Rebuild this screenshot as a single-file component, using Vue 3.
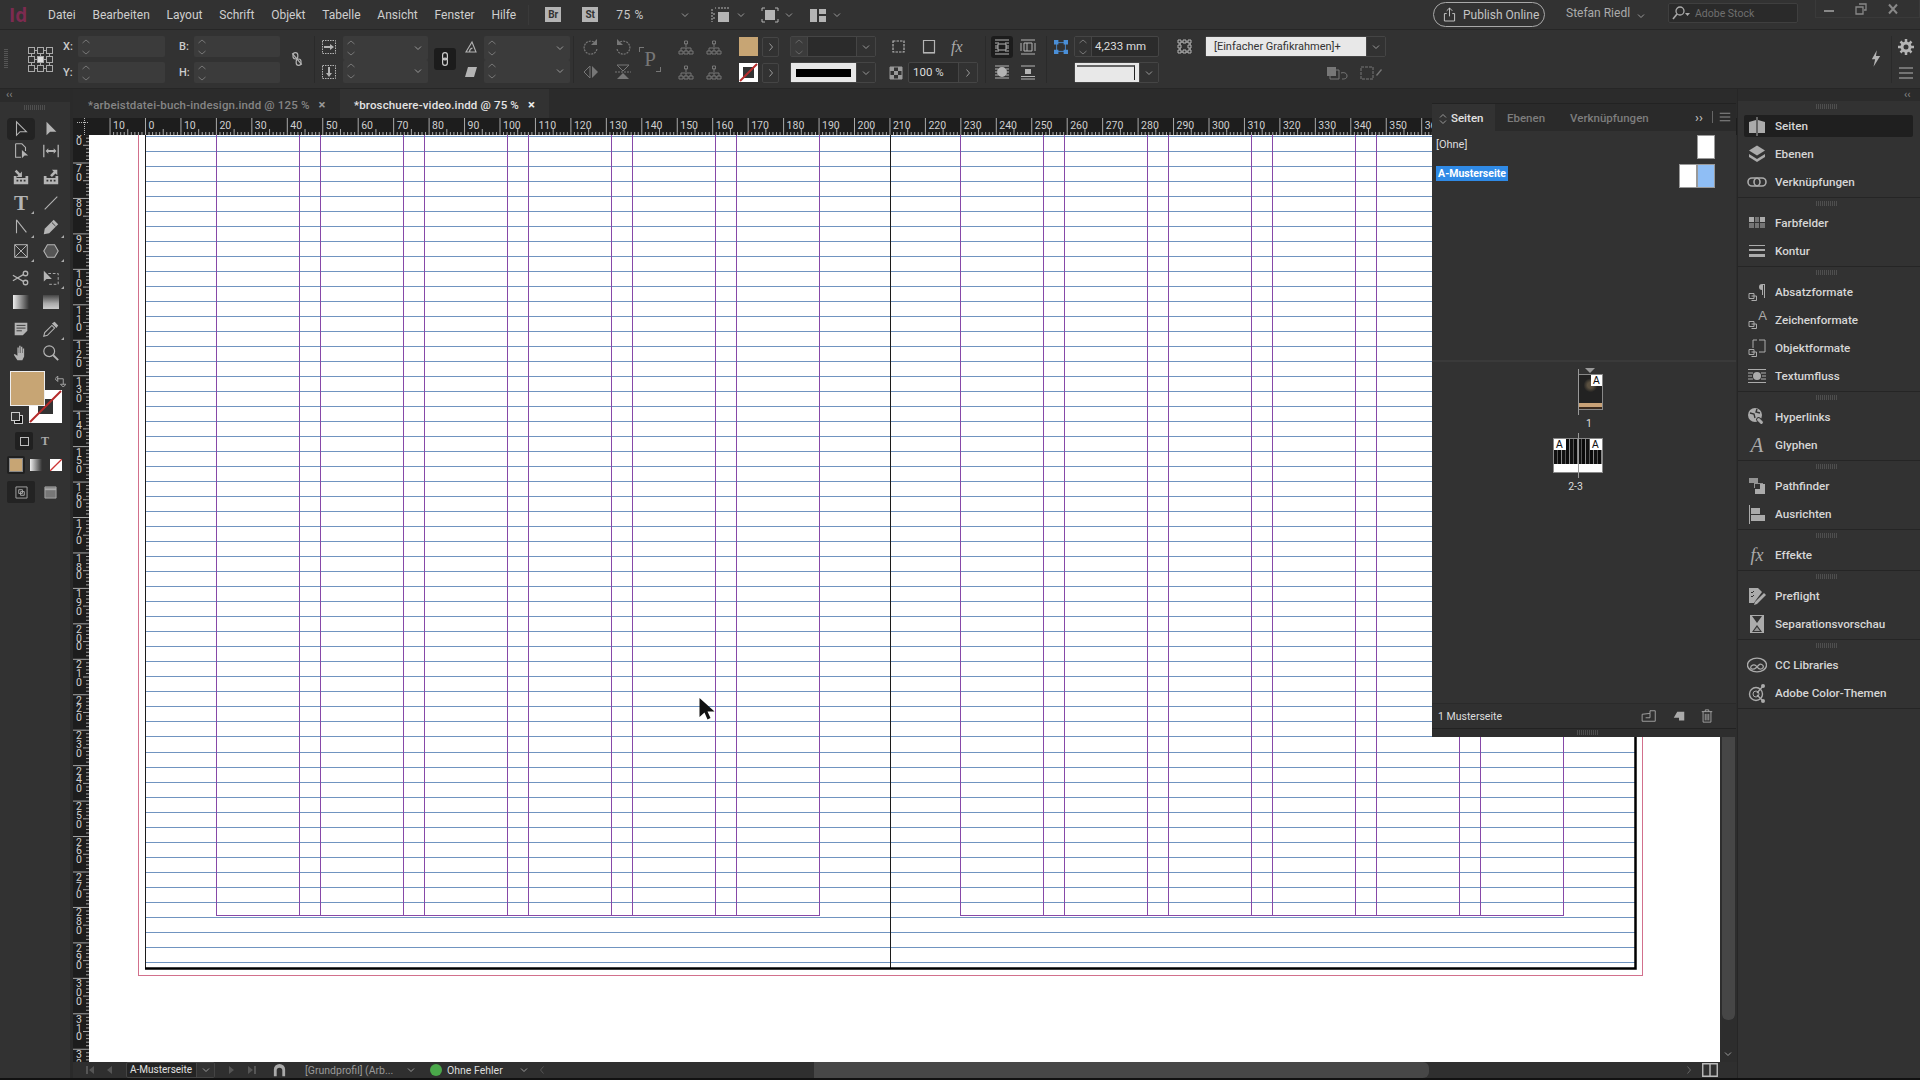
<template>
  <div class="app">
    <svg class="defs" width="0" height="0">
      <symbol id="i-chev" viewBox="0 0 10 10"><path d="M2 3.500l3 3 3-3" fill="none" stroke="currentColor" stroke-width="1"/></symbol>
      <symbol id="i-right" viewBox="0 0 10 10"><path d="M3.500 1.500l3 3.500-3 3.500" fill="none" stroke="currentColor" stroke-width="1"/></symbol>
      <symbol id="i-spin" viewBox="0 0 12 20"><path d="M2.500 6l3.500-3 3.500 3M2.500 14l3.500 3 3.500-3" fill="none" stroke="currentColor" stroke-width="1"/></symbol>
      <symbol id="i-seiten" viewBox="0 0 20 20"><path d="M2 6l7-2v13H2zM11 4l7 2v11h-7z" fill="currentColor"/><path d="M10 1v19" stroke="currentColor"/></symbol>
      <symbol id="i-ebenen" viewBox="0 0 20 20"><path d="M10 1.500l8 5-8 5-8-5z" fill="currentColor"/><path d="M2 10l8 5 8-5v3l-8 5-8-5z" fill="currentColor"/></symbol>
      <symbol id="i-link" viewBox="0 0 20 20"><rect x="1" y="6" width="12" height="8" rx="4" fill="none" stroke="currentColor" stroke-width="1.600"/><rect x="7" y="6" width="12" height="8" rx="4" fill="none" stroke="currentColor" stroke-width="1.600"/></symbol>
      <symbol id="i-farb" viewBox="0 0 20 20"><path d="M2 4h5v5H2zM13 4h5v5h-5z" fill="currentColor"/><path d="M8 4h4v5H8zM2 10h5v5H2zM8 10h4v5H8zM13 10h5v5h-5z" fill="currentColor" opacity=".55"/></symbol>
      <symbol id="i-kontur" viewBox="0 0 20 20"><path d="M2 4h16v1H2zM2 8h16v2H2zM2 13h16v3H2z" fill="currentColor"/></symbol>
      <symbol id="i-absatz" viewBox="0 0 20 20"><path d="M2 11.500h5v5H2zM4.500 14h5v4.500h-5" fill="none" stroke="currentColor"/><path d="M12 2h6v14h-1V3h-1v10h-1V8c-2 0-3-1-3-3s1-3 3-3z" fill="currentColor"/></symbol>
      <symbol id="i-zeichen" viewBox="0 0 20 20"><path d="M2 11.500h5v5H2zM4.500 14h5v4.500h-5" fill="none" stroke="currentColor"/></symbol>
      <symbol id="i-objekt" viewBox="0 0 20 20"><path d="M6 2h4M12 2h6v12h-6M6 2v8" fill="none" stroke="currentColor"/><path d="M2 11.500h5v5H2zM4.500 14h5v4.500h-5" fill="none" stroke="currentColor"/></symbol>
      <symbol id="i-fluss" viewBox="0 0 20 20"><path d="M1 3h18v1H1zM1 16h18v1H1zM1 6.500h5v1H1zM1 9.500h4v1H1zM1 12.500h5v1H1zM14 6.500h5v1h-5zM15 9.500h4v1h-4zM14 12.500h5v1h-5z" fill="currentColor"/><circle cx="10" cy="10" r="4" fill="currentColor"/></symbol>
      <symbol id="i-hyper" viewBox="0 0 20 20"><circle cx="8" cy="8" r="7" fill="currentColor"/><path d="M3 6l4 1 1 4M10 2l-1 3 4 1" fill="none" stroke="#323232" stroke-width="1.400"/><rect x="9" y="12" width="8" height="4" rx="2" transform="rotate(45 13 14)" fill="currentColor" stroke="#323232"/></symbol>
      <symbol id="i-path" viewBox="0 0 20 20"><path d="M2 2h9v5h5v5H7V7H2z" fill="currentColor" opacity=".8"/><path d="M8 8h10v10H8z" fill="currentColor"/><path d="M8 8h5v5H8z" fill="#323232"/></symbol>
      <symbol id="i-aus" viewBox="0 0 20 20"><path d="M2 1h1v19H2z" fill="currentColor"/><path d="M4 4h9v6H4zM4 11h14v6H4z" fill="currentColor"/></symbol>
      <symbol id="i-pre" viewBox="0 0 20 20"><path d="M2 2h9l4 4-6 8-2 3H2z" fill="currentColor"/><path d="M8 16l9-9 2 2-9 9-3 1z" fill="currentColor"/><path d="M4 6l1 1 2-2M4 10l1 1 2-2" fill="none" stroke="#323232"/></symbol>
      <symbol id="i-sep" viewBox="0 0 20 20"><path d="M3 1h14v18H3z" fill="currentColor"/><path d="M5 2l5 7 5-7zM5 18l5-7 5 7z" fill="#323232"/><path d="M7 17l3-4 3 4z" fill="currentColor" opacity=".8"/></symbol>
      <symbol id="i-cc" viewBox="1 1 22 18"><ellipse cx="12" cy="10" rx="10.500" ry="7.500" fill="none" stroke="currentColor" stroke-width="1.500"/><path d="M5 13c0-3 4-4 6-2l3 3c2 1 5 0 5-2s-3-4-5-2l-3 3c-2 2-6 2-6 0z" fill="none" stroke="currentColor" stroke-width="1.400"/></symbol>
      <symbol id="i-color" viewBox="0 0 20 20"><circle cx="9" cy="11" r="6.500" fill="none" stroke="currentColor" stroke-width="1.400"/><circle cx="9" cy="11" r="3" fill="none" stroke="currentColor"/><path d="M10 10l6-7M10 12l6 6" stroke="currentColor" stroke-width="1.400"/><circle cx="16" cy="3" r="2" fill="currentColor"/><circle cx="16" cy="18" r="2" fill="currentColor"/></symbol>

      <symbol id="t-sel" viewBox="0 0 20 20"><path d="M5 2v15l4-4h7z" fill="none" stroke="currentColor" stroke-width="1.200"/></symbol>
      <symbol id="t-dir" viewBox="0 0 20 20"><path d="M5 2v15l4-4h7z" fill="currentColor"/></symbol>
      <symbol id="t-page" viewBox="0 0 20 20"><path d="M4 2h7l4 4v4M4 2v15h6" fill="none" stroke="currentColor" stroke-width="1.200"/><path d="M11 9v9l3-3h4z" fill="currentColor"/></symbol>
      <symbol id="t-gap" viewBox="0 0 20 20"><path d="M2 3v14M18 3v14" stroke="currentColor" stroke-width="1.400"/><path d="M4 10l3-3v2h6V7l3 3-3 3v-2H7v2z" fill="currentColor"/></symbol>
      <symbol id="t-coll" viewBox="0 0 20 20"><path d="M2 9h3v2h10V9h3v9H2z" fill="currentColor"/><path d="M5 13h2v2H5zM9 13h2v2H9zM13 13h2v2h-2z" fill="#323232"/><path d="M5 2l4 4 2-2v6H5l2-2-4-4z" fill="currentColor"/></symbol>
      <symbol id="t-place" viewBox="0 0 20 20"><path d="M2 9h3v2h10V9h3v9H2z" fill="currentColor"/><path d="M5 13h2v2H5zM9 13h2v2H9zM13 13h2v2h-2z" fill="#323232"/><path d="M17 2v6l-2-2-4 4-2-2 4-4-2-2z" fill="currentColor"/></symbol>
      <symbol id="t-line" viewBox="0 0 20 20"><path d="M3 17L17 3" stroke="currentColor" stroke-width="1.200"/></symbol>
      <symbol id="t-pen" viewBox="0 0 20 20"><path d="M5 2v15M5 2l11 14" fill="none" stroke="currentColor" stroke-width="1.200"/></symbol>
      <symbol id="t-pencil" viewBox="0 0 20 20"><path d="M13 2l5 5-10 10-6 1 1-6z" fill="currentColor"/><path d="M11 5l4 4" stroke="#323232"/></symbol>
      <symbol id="t-frame" viewBox="0 0 20 20"><path d="M3 3h14v14H3zM3 3l14 14M17 3L3 17" fill="none" stroke="currentColor" stroke-width="1.100"/></symbol>
      <symbol id="t-poly" viewBox="0 0 20 20"><path d="M6 3h8l4 7-4 7H6l-4-7z" fill="#555" stroke="currentColor" stroke-width="1.200"/></symbol>
      <symbol id="t-sci" viewBox="0 0 20 20"><circle cx="15" cy="5" r="2.500" fill="none" stroke="currentColor" stroke-width="1.400"/><circle cx="15" cy="15" r="2.500" fill="none" stroke="currentColor" stroke-width="1.400"/><path d="M13 6L1 13M13 14L1 7" stroke="currentColor" stroke-width="1.400"/></symbol>
      <symbol id="t-free" viewBox="0 0 20 20"><path d="M7 5h11v12H7" fill="none" stroke="currentColor" stroke-dasharray="3 2"/><path d="M2 2v12l3-3h6z" fill="currentColor"/></symbol>
      <symbol id="t-note" viewBox="0 0 20 20"><path d="M3 3h14v9l-5 5H3z" fill="currentColor"/><path d="M5 6h10M5 9h10M5 12h6" stroke="#323232"/></symbol>
      <symbol id="t-drop" viewBox="0 0 20 20"><path d="M2 18l1-4 8-8 3 3-8 8z" fill="none" stroke="currentColor" stroke-width="1.200"/><path d="M11 4l3-2 4 4-2 3z" fill="currentColor"/></symbol>
      <symbol id="t-hand" viewBox="0 0 20 20"><path d="M6 18l-4-6 1-1 3 2V4h1.500v6H8V2h1.500v8h.5V3h1.500v7h.5V5h1.500v9l-2 4z" fill="currentColor"/></symbol>
      <symbol id="t-zoom" viewBox="0 0 20 20"><circle cx="8" cy="8" r="6" fill="none" stroke="currentColor" stroke-width="1.300"/><path d="M12.500 12.500L18 18" stroke="currentColor" stroke-width="2"/></symbol>

      <symbol id="c-unlink" viewBox="0 0 20 20"><rect x="5" y="2" width="6" height="8" rx="3" fill="none" stroke="currentColor" stroke-width="1.500"/><rect x="9" y="10" width="6" height="8" rx="3" fill="none" stroke="currentColor" stroke-width="1.500"/><path d="M4 3l12 14" stroke="currentColor" stroke-width="1.500"/></symbol>
      <symbol id="c-lock" viewBox="0 0 20 20"><rect x="7" y="2" width="6" height="9" rx="3" fill="none" stroke="currentColor" stroke-width="1.500"/><rect x="7" y="9" width="6" height="9" rx="3" fill="none" stroke="currentColor" stroke-width="1.500"/></symbol>
      <symbol id="c-sx" viewBox="0 0 14 14"><path d="M.5.5h13v13H.5z" fill="none" stroke="currentColor" stroke-dasharray="1.500 1"/><path d="M2 6h6V4l4 3-4 3V8H2z" fill="currentColor"/></symbol>
      <symbol id="c-sy" viewBox="0 0 14 14"><path d="M.5.5h13v13H.5z" fill="none" stroke="currentColor" stroke-dasharray="1.500 1"/><path d="M6 2h2v6h2l-3 4-3-4h2z" fill="currentColor"/></symbol>
      <symbol id="c-angle" viewBox="0 0 14 14"><path d="M2 12h10L8 2z M5.500 12c0-2 1-3.500 3-4" fill="none" stroke="currentColor" stroke-width="1.100"/></symbol>
      <symbol id="c-shear" viewBox="0 0 14 14"><path d="M4 2h9l-3 10H1z" fill="currentColor"/></symbol>
      <symbol id="c-rotr" viewBox="0 0 18 18"><path d="M14 6a6.500 6.500 0 1 0 1 5" fill="none" stroke="currentColor" stroke-width="1.200" stroke-dasharray="2 1"/><path d="M15 1v6H9z" fill="currentColor"/></symbol>
      <symbol id="c-rotl" viewBox="0 0 18 18"><path d="M4 6a6.500 6.500 0 1 1-1 5" fill="none" stroke="currentColor" stroke-width="1.200" stroke-dasharray="2 1"/><path d="M3 1v6h6z" fill="currentColor"/></symbol>
      <symbol id="c-fliph" viewBox="0 0 18 18"><path d="M8 3L2 9l6 6z" fill="none" stroke="currentColor"/><path d="M10 3l6 6-6 6z" fill="currentColor"/></symbol>
      <symbol id="c-flipv" viewBox="0 0 18 18"><path d="M3 2l6 6 6-6z" fill="none" stroke="currentColor"/><path d="M3 16l6-6 6 6z" fill="currentColor"/><path d="M1 9h16" stroke="currentColor" stroke-dasharray="2 1"/></symbol>
      <symbol id="c-tree" viewBox="0 0 18 18"><path d="M9 5v4M4 13v-3h10v3M9 10v3" fill="none" stroke="currentColor"/><path d="M2 13h4v3H2zM7 13h4v3H7zM12 13h4v3h-4zM7.500 3h3v3h-3z" fill="none" stroke="currentColor"/></symbol>
      <symbol id="c-box" viewBox="0 0 16 16"><path d="M2 2h11v11H2z" fill="none" stroke="currentColor" stroke-dasharray="2.500 1" stroke-width="1.200"/></symbol>
      <symbol id="c-shadow" viewBox="0 0 16 16"><path d="M2.500 1.500h11v12h-11z" fill="none" stroke="currentColor" stroke-width="1.200"/><path d="M2 13h12v2H2z" fill="currentColor" opacity=".6"/></symbol>
      <symbol id="c-check" viewBox="0 0 14 14"><path d="M1 1h12v12H1z" fill="none" stroke="currentColor"/><path d="M1 1h4v4H1zM9 1h4v4H9zM5 5h4v4H5zM1 9h4v4H1zM9 9h4v4H9z" fill="currentColor"/></symbol>
      <symbol id="c-wrap1" viewBox="0 0 18 18"><path d="M2 2h14M2 16h14M2 5h4M12 5h4M2 13h4M12 13h4" stroke="currentColor"/><path d="M5 6h8v6H5z" fill="none" stroke="currentColor"/><path d="M2 8h3M2 10h3M13 8h3M13 10h3" stroke="currentColor"/></symbol>
      <symbol id="c-wrap2" viewBox="0 0 18 18"><path d="M2 2h14M2 16h14" stroke="currentColor"/><path d="M5 5h8v8H5z" fill="none" stroke="currentColor"/><path d="M2 5v8M16 5v8M8 5v8" stroke="currentColor"/></symbol>
      <symbol id="c-wrap3" viewBox="0 0 18 18"><circle cx="9" cy="9" r="5" fill="currentColor"/><path d="M2 3h14M2 15h14M2 6h3M13 6h3M2 9h2M14 9h2M2 12h3M13 12h3" stroke="currentColor"/></symbol>
      <symbol id="c-wrap4" viewBox="0 0 18 18"><path d="M6 6h6v5H6z" fill="currentColor"/><path d="M2 3h14M2 13.500h14M2 16h14" stroke="currentColor"/></symbol>
      <symbol id="c-corner" viewBox="0 0 16 16"><path d="M3 3h10v10H3z" fill="none" stroke="#4a8fd8"/><path d="M0 0h5v5H0zM11 0h5v5h-5zM0 11h5v5H0zM11 11h5v5h-5z" fill="#4a8fd8"/></symbol>
      <symbol id="c-copts" viewBox="0 0 16 16"><path d="M3 3h10v10H3z" fill="none" stroke="currentColor"/><path d="M1 1h3v3H1zM6 1h3v3H6zM11 1h3v3h-3zM1 6h3v3H1zM11 6h3v3h-3zM1 11h3v3H1zM6 11h3v3H6zM11 11h3v3h-3z" fill="#323232" stroke="currentColor"/></symbol>
      <symbol id="c-bolt" viewBox="0 0 12 20"><path d="M7 0L1 11h4l-2 9 8-13H6z" fill="currentColor"/></symbol>
      <symbol id="c-gear" viewBox="0 0 16 16"><circle cx="8" cy="8" r="4" fill="none" stroke="currentColor" stroke-width="3"/><path d="M8 0v16M0 8h16M2.500 2.500l11 11M13.500 2.500l-11 11" stroke="currentColor" stroke-width="2.500" stroke-dasharray="3 10 3"/></symbol>
      <symbol id="c-ham" viewBox="0 0 16 16"><path d="M1 3h14M1 8h14M1 13h14" stroke="currentColor" stroke-width="1.200"/></symbol>
      <symbol id="c-clear" viewBox="0 0 24 16"><path d="M1 2h9v9H1z" fill="currentColor"/><path d="M4 5h9v9H4z" fill="none" stroke="currentColor"/><path d="M15 8c3-1 6 0 6 3s-3 3-5 3" fill="none" stroke="currentColor"/></symbol>
      <symbol id="c-brk" viewBox="0 0 24 16"><path d="M1 2h12v12H1z" fill="none" stroke="currentColor" stroke-dasharray="3 1"/><path d="M16 10l5-6 1 1-5 6z" fill="currentColor"/></symbol>
      <symbol id="m-view" viewBox="0 0 20 16"><path d="M7 5h11v10H7z" fill="currentColor"/><path d="M1 2v13M4 1h1M8 0v3M11 0v3M14 0v3M17 0v3M2 7h2M2 11h2" stroke="currentColor" stroke-dasharray="2 1"/></symbol>
      <symbol id="m-screen" viewBox="0 0 18 16"><path d="M4 3h10v10H4z" fill="currentColor"/><path d="M1 4V1h3M14 1h3v3M1 12v3h3M14 15h3v-3" fill="none" stroke="currentColor"/></symbol>
      <symbol id="m-layout" viewBox="0 0 18 16"><path d="M1 2h7v13H1zM10 2h7v5h-7zM10 9h7v6h-7z" fill="currentColor"/></symbol>
      <symbol id="p-edit" viewBox="0 0 20 16"><path d="M1 6l9-1V2h6v12H1z" fill="none" stroke="currentColor"/><path d="M10 5v5H5" fill="none" stroke="currentColor"/></symbol>
      <symbol id="p-new" viewBox="0 0 16 16"><path d="M6 3h8v10H8v-3H2z" fill="currentColor"/></symbol>
      <symbol id="p-trash" viewBox="0 0 16 16"><path d="M2 3h12M6 3V1h4v2M3.500 3v12h9V3M6 5.500V13M8 5.500V13M10 5.500V13" fill="none" stroke="currentColor"/></symbol>
      <symbol id="s-first" viewBox="0 0 12 12"><path d="M2 2h2v8H2zM10 2v8L5 6z" fill="currentColor"/></symbol>
      <symbol id="s-prev" viewBox="0 0 12 12"><path d="M8 2v8L3 6z" fill="currentColor"/></symbol>
      <symbol id="s-next" viewBox="0 0 12 12"><path d="M4 2v8l5-4z" fill="currentColor"/></symbol>
      <symbol id="s-last" viewBox="0 0 12 12"><path d="M8 2h2v8H8zM2 2v8l5-4z" fill="currentColor"/></symbol>
      <symbol id="s-prof" viewBox="0 0 16 16"><path d="M2 14V7a6 6 0 0 1 12 0v7h-3V8a3 3 0 0 0-6 0v6z" fill="currentColor"/></symbol>
      <symbol id="s-split" viewBox="0 0 16 14"><path d="M.750.750h14.500v12.500H.750zM8 1v12" fill="none" stroke="currentColor" stroke-width="1.400"/></symbol>
    </svg>

    <header class="menubar">
      <span class="logo">Id</span>
      <nav class="menu">
        <span v-for="m in menus" :key="m">{{ m }}</span>
      </nav>
      <span class="sep-v"></span>
      <span class="chip chip-br">Br</span>
      <span class="chip chip-st">St</span>
      <span class="zoomval">75 %</span>
      <svg class="chev zoomchev"><use href="#i-chev"/></svg>
      <svg class="mico m1"><use href="#m-view"/></svg><svg class="chev"><use href="#i-chev"/></svg>
      <svg class="mico m2"><use href="#m-screen"/></svg><svg class="chev"><use href="#i-chev"/></svg>
      <svg class="mico m2"><use href="#m-layout"/></svg><svg class="chev"><use href="#i-chev"/></svg>
      <div class="publish">
        <svg viewBox="0 0 14 16"><path d="M7 1v9M4 4l3-3 3 3M4 7H1.500v8h11V7H10" fill="none" stroke="currentColor"/></svg>
        Publish Online
      </div>
      <span class="user">Stefan Riedl</span>
      <svg class="chev userchev"><use href="#i-chev"/></svg>
      <div class="search">
        <svg viewBox="0 0 18 14"><circle cx="8" cy="5" r="4" fill="none" stroke="currentColor" stroke-width="1.300"/><path d="M5 8l-4 5" stroke="currentColor" stroke-width="1.600"/><path d="M13 7h5l-2.500 3z" fill="currentColor"/></svg>
        Adobe Stock
      </div>
      <div class="winbtns">
        <svg viewBox="0 0 12 12"><path d="M1 7h10v2H1z" fill="currentColor"/></svg>
        <svg viewBox="0 0 12 12"><path d="M4 1h7v6H9M1 4h7v7H1z" fill="none" stroke="currentColor" stroke-width="1.300"/></svg>
        <svg viewBox="0 0 12 12"><path d="M2 1.500l8 9M10 1.500l-8 9" stroke="currentColor" stroke-width="2"/></svg>
      </div>
    </header>

    <section class="ctl">
      <div class="vgrip"></div>
      <svg class="refgrid" viewBox="0 0 25 25">
        <template v-for="r in 3" :key="r">
          <rect v-for="c in 3" :key="c" :x="(c - 1) * 9 + 0.5" :y="(r - 1) * 9 + 0.5" width="6" height="6" :fill="r === 2 && c === 2 ? '#ddd' : 'none'" stroke="#aaa"/>
        </template>
        <path d="M7 3.500h2M16 3.500h2M7 12.500h2M16 12.500h2M7 21.500h2M16 21.500h2M3.500 7v2M12.500 7v2M21.500 7v2M3.500 16v2M12.500 16v2M21.500 16v2" stroke="#aaa"/>
      </svg>
      <div class="col c-xy">
        <div class="lf"><b>X:</b><div class="fld"><svg class="spin"><use href="#i-spin"/></svg></div></div>
        <div class="lf"><b>Y:</b><div class="fld"><svg class="spin"><use href="#i-spin"/></svg></div></div>
      </div>
      <div class="col c-bh">
        <div class="lf"><b>B:</b><div class="fld"><svg class="spin"><use href="#i-spin"/></svg></div></div>
        <div class="lf"><b>H:</b><div class="fld"><svg class="spin"><use href="#i-spin"/></svg></div></div>
      </div>
      <svg class="ic16 c-unlink"><use href="#c-unlink"/></svg>
      <span class="dv d1"></span>
      <div class="col c-si">
        <svg class="ic14"><use href="#c-sx"/></svg>
        <svg class="ic14"><use href="#c-sy"/></svg>
      </div>
      <div class="col c-sf">
        <div class="fld"><svg class="spin"><use href="#i-spin"/></svg><svg class="chev end"><use href="#i-chev"/></svg></div>
        <div class="fld"><svg class="spin"><use href="#i-spin"/></svg><svg class="chev end"><use href="#i-chev"/></svg></div>
      </div>
      <div class="lockbtn"><svg class="ic16"><use href="#c-lock"/></svg></div>
      <div class="col c-ai">
        <svg class="ic14"><use href="#c-angle"/></svg>
        <svg class="ic14"><use href="#c-shear"/></svg>
      </div>
      <div class="col c-af">
        <div class="fld"><svg class="spin"><use href="#i-spin"/></svg><svg class="chev end"><use href="#i-chev"/></svg></div>
        <div class="fld"><svg class="spin"><use href="#i-spin"/></svg><svg class="chev end"><use href="#i-chev"/></svg></div>
      </div>
      <span class="dv d2"></span>
      <div class="col c-rot dim">
        <div class="pair"><svg class="ic18"><use href="#c-rotr"/></svg><svg class="ic18"><use href="#c-rotl"/></svg></div>
        <div class="pair"><svg class="ic18"><use href="#c-fliph"/></svg><svg class="ic18"><use href="#c-flipv"/></svg></div>
      </div>
      <div class="pbox"><span>P</span></div>
      <div class="col c-tree dim">
        <div class="pair"><svg class="ic18"><use href="#c-tree"/></svg><svg class="ic18"><use href="#c-tree"/></svg></div>
        <div class="pair"><svg class="ic18"><use href="#c-tree"/></svg><svg class="ic18"><use href="#c-tree"/></svg></div>
      </div>
      <div class="col c-sw">
        <div class="swrow"><span class="swatch fill"></span><span class="cbtn"><svg class="chev"><use href="#i-right"/></svg></span></div>
        <div class="swrow"><span class="swatch none"><svg viewBox="0 0 19 19"><path d="M4 4h11v11H4z" fill="#333"/><path d="M1 18L18 1" stroke="#b52a2a" stroke-width="2"/></svg></span><span class="cbtn"><svg class="chev"><use href="#i-right"/></svg></span></div>
      </div>
      <div class="col c-st">
        <div class="outl">
          <span class="spinbox dark"><svg class="spin"><use href="#i-spin"/></svg></span>
          <span class="val"></span>
          <span class="cbtn2"><svg class="chev"><use href="#i-chev"/></svg></span>
        </div>
        <div class="outl">
          <span class="strokebox"><i></i></span>
          <span class="cbtn2"><svg class="chev"><use href="#i-chev"/></svg></span>
        </div>
      </div>
      <div class="col c-fx">
        <div class="fxrow">
          <svg class="ic16"><use href="#c-box"/></svg>
          <svg class="ic16"><use href="#c-shadow"/></svg>
          <span class="fxt">fx</span>
        </div>
        <div class="oprow">
          <svg class="ic14"><use href="#c-check"/></svg>
          <div class="outl opacity"><span class="val">100 %</span><span class="cbtn2"><svg class="chev"><use href="#i-right"/></svg></span></div>
        </div>
      </div>
      <span class="dv d3"></span>
      <div class="col c-wrap">
        <div class="pair"><span class="darkb"><svg class="ic18"><use href="#c-wrap1"/></svg></span><svg class="ic18 wr"><use href="#c-wrap2"/></svg></div>
        <div class="pair"><span class="lightb"><svg class="ic18"><use href="#c-wrap3"/></svg></span><svg class="ic18 wr"><use href="#c-wrap4"/></svg></div>
      </div>
      <span class="dv d4"></span>
      <div class="col c-cn"><svg class="ic14"><use href="#c-corner"/></svg></div>
      <div class="col c-cf">
        <div class="outl"><span class="spinbox"><svg class="spin"><use href="#i-spin"/></svg></span><span class="val big">4,233 mm</span></div>
        <div class="outl">
          <span class="cornerbox"><i></i></span>
          <span class="cbtn2"><svg class="chev"><use href="#i-chev"/></svg></span>
        </div>
      </div>
      <div class="col c-co"><svg class="ic16"><use href="#c-copts"/></svg></div>
      <div class="col c-style">
        <div class="outl"><span class="stylebox">[Einfacher Grafikrahmen]+</span><span class="cbtn2"><svg class="chev"><use href="#i-chev"/></svg></span></div>
        <div class="styleicons dim"><svg><use href="#c-clear"/></svg><svg><use href="#c-brk"/></svg></div>
      </div>
      <svg class="bolt"><use href="#c-bolt"/></svg>
      <span class="dv d5"></span>
      <div class="col c-gear">
        <svg class="ic16"><use href="#c-gear"/></svg>
        <svg class="ic16"><use href="#c-ham"/></svg>
      </div>
    </section>

    <main class="work">
      <aside class="tools">
        <div class="collapse">‹‹</div>
        <div class="grip"></div>
        <div class="toolgrid">
          <div v-for="t in tools" :key="t.id" class="tool" :class="{ more: t.more, on: t.on }">
            <div v-if="t.css" class="gsw" :class="t.css"></div>
            <span v-else-if="t.glyph" class="toolglyph">{{ t.glyph }}</span>
            <svg v-else><use :href="'#t-' + t.id"/></svg>
          </div>
        </div>
        <div class="well">
          <span class="well-fill"></span>
          <span class="well-stroke"><svg viewBox="0 0 33 33"><path d="M9 9h15v15H9z" fill="#333"/><path d="M1 32L32 1" stroke="#b52a2a" stroke-width="2"/></svg></span>
          <svg class="well-swap" viewBox="0 0 12 12"><path d="M2 3h7v6M0 3l3-3v6zM9 12l-3-3h6z" fill="none" stroke="#aaa"/></svg>
          <span class="well-def"><i></i><b></b></span>
        </div>
        <div class="fmt">
          <span class="fmt-on"><i></i></span>
          <span class="fmt-t">T</span>
        </div>
        <div class="apply">
          <span class="apply-on"><i></i></span>
          <span class="apply-g"></span>
          <span class="apply-n"><svg viewBox="0 0 12 12"><path d="M0 12L12 0" stroke="#c33" stroke-width="1.300"/></svg></span>
        </div>
        <div class="viewmode">
          <span class="vm-on"><svg viewBox="0 0 14 14"><path d="M1 1h12v12H1z" fill="none" stroke="#aaa"/><path d="M4 4h4v4H4zM6 6h4v4H6z" fill="none" stroke="#aaa"/></svg></span>
          <span class="vm-r"><svg viewBox="0 0 14 14"><path d="M1 1h12v12H1z" fill="#777" stroke="#aaa"/><path d="M1 3.500h12" stroke="#aaa" stroke-width="2"/></svg></span>
        </div>
      </aside>

      <div class="doc">
        <div class="tabs">
          <div class="tab">*arbeistdatei-buch-indesign.indd @ 125 %<span class="x">×</span></div>
          <div class="tab active">*broschuere-video.indd @ 75 %<span class="x">×</span></div>
        </div>
        <div class="hrow">
          <div class="corner"><svg viewBox="0 0 16 17"><path d="M4 4.500h11M11.500 0v17" stroke="#bbb" stroke-dasharray="1 1"/></svg></div>
          <div class="hruler">
            <svg class="ticks"><path :d="hTicks" stroke="#a8a8a8" fill="none"/></svg>
            <span v-for="l in hLabels" :key="l.x" class="hl" :style="{ left: l.x + 'px' }">{{ l.v }}</span>
          </div>
        </div>
        <div class="mid">
          <div class="vruler">
            <svg class="ticks"><path :d="vTicks" stroke="#a8a8a8" fill="none"/></svg>
            <span v-for="l in vLabels" :key="l.y" class="vl" :style="{ top: l.y + 'px' }">
              <i v-for="(d, i) in l.v" :key="i">{{ d }}</i>
            </span>
          </div>
          <div class="canvas">
            <svg class="sheet" viewBox="89 135 1631 927">
              <path :d="baseline" stroke="#7094c0" fill="none" shape-rendering="crispEdges"/>
              <path :d="margins" stroke="#8649a8" fill="none" shape-rendering="crispEdges"/>
              <path d="M138 135V975H1642V135" stroke="#d2708c" fill="none" shape-rendering="crispEdges"/>
              <path d="M145.500 135V968.500M890.500 135V968.500" stroke="#1c1c1c" fill="none" shape-rendering="crispEdges"/>
              <path d="M145 968.500H1635.500V135" stroke="#000" stroke-width="2.500" fill="none"/>
              <path d="M699.500 698v19l5-4.500 3 7 3-1.500-3-6.500h7z" fill="#111"/>
            </svg>
          </div>
          <div class="vscroll">
            <span class="vthumb"></span>
            <svg class="chev"><use href="#i-chev"/></svg>
          </div>
        </div>
        <footer class="status">
          <svg class="s12 s-a"><use href="#s-first"/></svg>
          <svg class="s12 s-b"><use href="#s-prev"/></svg>
          <div class="pagesel"><span>A-Musterseite</span><i><svg class="chev"><use href="#i-chev"/></svg></i></div>
          <svg class="s12 s-c"><use href="#s-next"/></svg>
          <svg class="s12 s-d"><use href="#s-last"/></svg>
          <svg class="s16 s-e"><use href="#s-prof"/></svg>
          <span class="st-prof">[Grundprofil] (Arb...</span>
          <svg class="chev s-f"><use href="#i-chev"/></svg>
          <span class="dot"></span>
          <span class="st-err">Ohne Fehler</span>
          <svg class="chev s-g"><use href="#i-chev"/></svg>
          <svg class="chev s-h"><use href="#i-right"/></svg>
          <div class="hthumb"></div>
          <svg class="chev s-i"><use href="#i-right"/></svg>
          <svg class="s-j"><use href="#s-split"/></svg>
        </footer>

        <section class="pages">
          <div class="p-tabs">
            <div class="p-tab active"><svg viewBox="0 0 8 12"><path d="M1 4.500l3-3 3 3M1 7.500l3 3 3-3" fill="none" stroke="#999"/></svg>Seiten</div>
            <div class="p-tab">Ebenen</div>
            <div class="p-tab">Verknüpfungen</div>
            <span class="p-more">››</span>
            <span class="p-bar"></span>
            <svg class="p-ham"><use href="#c-ham"/></svg>
          </div>
          <div class="p-masters">
            <div class="master first"><span>[Ohne]</span><i class="pg w"></i></div>
            <div class="master two"><span class="sel">A-Musterseite</span><i class="pg w"></i><i class="pg b"></i></div>
          </div>
          <div class="p-thumbs">
            <div class="thumb t1">
              <span class="tri"></span>
              <div class="img one"><u>A</u></div>
              <em>1</em>
            </div>
            <div class="thumb t2">
              <div class="img spread"><u>A</u><u>A</u></div>
              <em>2-3</em>
            </div>
          </div>
          <div class="p-foot">
            <span>1 Musterseite</span>
            <svg class="pf1"><use href="#p-edit"/></svg>
            <svg class="pf2"><use href="#p-new"/></svg>
            <svg class="pf3"><use href="#p-trash"/></svg>
          </div>
          <div class="p-grip"><div class="grip"></div></div>
        </section>
      </div>

      <aside class="dock">
        <div class="collapse right">‹‹</div>
        <div v-for="(sec, i) in dock" :key="i" class="dsec">
          <div class="grip"></div>
          <div v-for="item in sec" :key="item.t" class="ditem" :class="{ active: item.t === 'Seiten' }">
            <span class="dglyph" v-if="item.g" :class="item.i">
              <svg v-if="item.i === 'zeichen'"><use href="#i-zeichen"/></svg>
              <em>{{ item.g }}</em>
            </span>
            <svg v-else><use :href="'#i-' + item.i"/></svg>
            <span>{{ item.t }}</span>
          </div>
        </div>
      </aside>
    </main>
    <div class="blackline"></div>
  </div>
</template>

<script setup>
const menus = ['Datei', 'Bearbeiten', 'Layout', 'Schrift', 'Objekt', 'Tabelle', 'Ansicht', 'Fenster', 'Hilfe']

const tools = [
  { id: 'sel', on: true }, { id: 'dir' },
  { id: 'page' }, { id: 'gap' },
  { id: 'coll' }, { id: 'place' },
  { id: 'type', glyph: 'T', more: true }, { id: 'line' },
  { id: 'pen', more: true }, { id: 'pencil', more: true },
  { id: 'frame', more: true }, { id: 'poly', more: true },
  { id: 'sci' }, { id: 'free', more: true },
  { id: 'grad', css: 'g1' }, { id: 'feather', css: 'g2' },
  { id: 'note' }, { id: 'drop', more: true },
  { id: 'hand' }, { id: 'zoom' },
]

const dock = [
  [{ t: 'Seiten', i: 'seiten' }, { t: 'Ebenen', i: 'ebenen' }, { t: 'Verknüpfungen', i: 'link' }],
  [{ t: 'Farbfelder', i: 'farb' }, { t: 'Kontur', i: 'kontur' }],
  [{ t: 'Absatzformate', i: 'absatz' }, { t: 'Zeichenformate', i: 'zeichen', g: 'A' }, { t: 'Objektformate', i: 'objekt' }, { t: 'Textumfluss', i: 'fluss' }],
  [{ t: 'Hyperlinks', i: 'hyper' }, { t: 'Glyphen', i: 'gly', g: 'A' }],
  [{ t: 'Pathfinder', i: 'path' }, { t: 'Ausrichten', i: 'aus' }],
  [{ t: 'Effekte', i: 'fx', g: 'fx' }],
  [{ t: 'Preflight', i: 'pre' }, { t: 'Separationsvorschau', i: 'sep' }],
  [{ t: 'CC Libraries', i: 'cc' }, { t: 'Adobe Color-Themen', i: 'color' }],
]

// ruler scale: 10 mm = 35.45 px on screen
const STEP = 35.45
const ORIGIN_X = 56.5 // page origin, relative to the ruler's left edge
const ORIGIN_Y = -220.15 // value 0, relative to the ruler's top edge

const hLabels = []
let hTicks = ''
// labels past 360 would sit under the floating pages panel
for (let k = -1; k <= 36; k++) {
  const x = ORIGIN_X + k * STEP
  hLabels.push({ x: x + 3, v: Math.abs(k * 10) })
  hTicks += `M${x} 0V17`
  for (let m = 1; m < 10; m++) {
    const mx = x + (m * STEP) / 10
    hTicks += `M${mx} ${m === 5 ? 11 : 14}V17`
  }
}

const vLabels = []
let vTicks = ''
for (let k = 1; k < 34; k++) {
  const y = ORIGIN_Y + k * STEP
  vLabels.push({ y: y + 2, v: String(k * 10) })
  vTicks += `M0 ${y}H16`
  for (let m = 1; m < 10; m++) {
    const my = y + (m * STEP) / 10
    vTicks += `M${m === 5 ? 10 : 13} ${my}H16`
  }
}

let baseline = ''
for (let k = -1; k <= 54; k++) {
  const y = Math.round(150.7 + k * 15.02) + 0.5
  baseline += `M145 ${y}H1635`
}

const leftCols = [216.5, 320.5, 424.5, 528.5, 632.5, 736.5]
const rightCols = [960.5, 1064.5, 1168.5, 1272.5, 1376.5, 1480.5]
let margins = ''
for (const x of [...leftCols, ...rightCols]) {
  margins += `M${x} 135V915.5M${x + 83} 135V915.5`
}
margins += 'M216.5 915.5H819.5M960.5 915.5H1563.5'
</script>

<style>
html, body { margin: 0; background: #323232; overflow: hidden; }
</style>

<style scoped>
.app {
  width: 1920px;
  height: 1080px;
  display: flex;
  flex-direction: column;
  background: #323232;
  color: #c8c8c8;
  font-family: Roboto, "Liberation Sans", sans-serif;
  font-size: 12px;
  overflow: hidden;
  position: relative;
}
.defs { position: absolute; }

svg { display: block; color: #b4b4b4; flex: none; }
.chev { width: 10px; height: 10px; color: #999; }
.spin { width: 12px; height: 20px; color: #777; }
.ic14 { width: 14px; height: 14px; }
.ic16 { width: 16px; height: 16px; }
.ic18 { width: 18px; height: 18px; }
.dim svg { color: #777; }

/* menu bar */
.menubar {
  height: 29px;
  border-bottom: 1px solid #262626;
  display: flex;
  align-items: center;
  position: relative;
  flex: none;
}
.logo { width: 48px; padding-left: 9px; box-sizing: border-box; font: bold 19px "Open Sans", sans-serif; color: #7c2b50; }
.menu { display: flex; gap: 16.800px; color: #cfcfcf; }
.sep-v { width: 1px; height: 20px; background: #3a3a3a; margin-left: 12px; }
.chip { width: 16px; height: 15px; background: #b4b4b4; color: #333; font: bold 10px/15px Roboto, sans-serif; text-align: center; }
.chip-br { margin-left: 16px; }
.chip-st { margin-left: 21px; }
.zoomval { margin-left: 18px; width: 46px; color: #c8c8c8; letter-spacing: .6px; }
.zoomchev { margin-left: 18px; }
.mico { height: 16px; }
.m1 { width: 20px; margin-left: 21px; margin-right: 5px; }
.m2 { width: 18px; margin-left: 15px; margin-right: 5px; }
.publish {
  position: absolute;
  left: 1433px;
  top: 2px;
  width: 112px;
  height: 25px;
  box-sizing: border-box;
  border: 1px solid #a8a8a8;
  border-radius: 13px;
  display: flex;
  align-items: center;
  padding-left: 9px;
  gap: 7px;
  color: #c4c4c4;
}
.publish svg { width: 13px; height: 15px; color: #ccc; }
.user { position: absolute; left: 1566px; top: 6px; color: #aaa; }
.userchev { position: absolute; left: 1636px; top: 11px; }
.search {
  position: absolute;
  left: 1668px;
  top: 3px;
  width: 130px;
  height: 20px;
  box-sizing: border-box;
  background: #2a2a2a;
  border: 1px solid #3f3f3f;
  border-radius: 2px;
  display: flex;
  align-items: center;
  gap: 5px;
  padding-left: 3px;
  font-size: 10.500px;
  color: #6f6f6f;
}
.search svg { width: 18px; height: 14px; color: #aaa; }
.winbtns {
  position: absolute;
  right: 0;
  top: 0;
  width: 105px;
  height: 18px;
  box-sizing: border-box;
  border: 1px solid #3a3a3a;
  border-top: 0;
  display: flex;
  align-items: center;
  padding: 0 20px 0 7px;
  justify-content: space-between;
}
.winbtns svg { width: 12px; height: 12px; color: #888; }

/* control bar */
.ctl {
  height: 59px;
  box-sizing: border-box;
  padding-top: 6px;
  border-bottom: 1px solid #262626;
  background: #323232;
  display: flex;
  align-items: flex-start;
  position: relative;
  flex: none;
}
.col { height: 47px; display: flex; flex-direction: column; justify-content: space-between; flex: none; }
.vgrip { width: 4px; height: 20px; margin: 13px 0 0 4px; background: repeating-linear-gradient(#555 0 1px, transparent 1px 2px); }
.refgrid { width: 25px; height: 25px; margin: 11px 0 0 20px; }
.lf { display: flex; align-items: center; }
.lf b { width: 15px; font-weight: 500; font-size: 11px; color: #ccc; }
.fld { height: 21px; background: #3b3b3b; border-radius: 2px; display: flex; align-items: center; padding-left: 2px; flex: 1; justify-content: space-between; padding-right: 5px; }
.c-xy { width: 102px; margin-left: 10px; }
.c-bh { width: 101px; margin-left: 14px; }
.c-unlink { margin: 15px 0 0 9px; }
.dv { width: 1px; height: 47px; background: #2a2a2a; flex: none; }
.d1 { margin-left: 9px; }
.c-si { width: 14px; margin-left: 7px; padding: 4px 0; height: 39px; }
.c-sf { width: 85px; margin-left: 7px; }
.lockbtn { width: 22px; height: 22px; margin: 12px 0 0 6px; background: #1c1c1c; border-radius: 3px; display: flex; align-items: center; justify-content: center; }
.lockbtn svg { color: #ccc; }
.c-ai { width: 14px; margin-left: 8px; padding: 4px 0; height: 39px; }
.c-af { width: 86px; margin-left: 6px; }
.d2 { margin-left: 3px; }
.c-rot { width: 50px; margin-left: 8px; padding: 2px 0; height: 43px; }
.pair { display: flex; justify-content: space-between; }
.pbox { width: 22px; height: 25px; margin: 11px 0 0 7px; position: relative; font: 21px/25px "Liberation Serif", serif; color: #777; text-align: center; }
.pbox::before, .pbox::after { content: ""; position: absolute; width: 4px; height: 4px; border: 1px solid #777; }
.pbox::before { left: 0; top: 0; border-right: 0; border-bottom: 0; }
.pbox::after { right: 0; bottom: 0; border-left: 0; border-top: 0; }
.c-tree { width: 46px; margin-left: 16px; padding: 2px 0; height: 43px; }
.c-sw { width: 40px; margin-left: 16px; }
.swrow { display: flex; gap: 4px; height: 21px; align-items: center; }
.swatch { width: 19px; height: 19px; }
.swatch.fill { background: #c7a574; }
.swatch.none { background: #fff; }
.cbtn { width: 17px; height: 20px; box-sizing: border-box; border: 1px solid #454545; border-radius: 2px; display: flex; align-items: center; justify-content: center; }
.c-st { width: 86px; margin-left: 11px; }
.outl { height: 21px; box-sizing: border-box; border: 1px solid #454545; border-radius: 2px; display: flex; align-items: stretch; background: #2b2b2b; }
.spinbox { width: 16px; background: #323232; display: flex; align-items: center; justify-content: center; border-right: 1px solid #454545; }
.spinbox.dark .spin { color: #666; }
.spinbox.dark { width: 16px; background: #3b3b3b; }
.val { flex: 1; font-size: 11.500px; line-height: 19px; padding-left: 4px; color: #ddd; }
.val.big { padding-left: 3px; }
.cbtn2 { width: 18px; flex: none; border-left: 1px solid #454545; display: flex; align-items: center; justify-content: center; background: #323232; }
.strokebox { flex: 1; background: #e8e8e8; display: flex; align-items: center; padding: 0 5px; }
.strokebox i { display: block; height: 8px; flex: 1; background: #000; }
.c-fx { width: 90px; margin-left: 14px; }
.fxrow { display: flex; height: 21px; align-items: center; padding-left: 1px; }
.fxrow svg:nth-child(2) { margin-left: 14px; }
.fxt { margin-left: 14px; font: italic 16px/20px "Liberation Serif", serif; color: #aaa; }
.oprow { display: flex; align-items: center; }
.oprow .ic14 { margin: 0 5px 0 -1px; color: #999; }
.opacity { flex: none; width: 70px; }
.d3 { margin-left: 5px; }
.c-wrap { width: 48px; margin-left: 5px; }
.c-wrap .pair { align-items: center; height: 22px; }
.darkb, .lightb { width: 22px; height: 22px; border-radius: 3px; display: flex; align-items: center; justify-content: center; }
.darkb { background: #1c1c1c; }
.wr { margin-right: 2px; }
.d4 { margin-left: 7px; }
.c-cn { width: 14px; margin-left: 7px; padding-top: 4px; }
.c-cf { width: 85px; margin-left: 6px; }
.cornerbox { flex: 1; background: #e8e8e8; position: relative; }
.cornerbox i { position: absolute; left: 2px; right: 4px; top: 2px; bottom: 2px; border-top: 2px solid #666; border-right: 1px solid #222; }
.c-co { width: 16px; margin-left: 18px; padding-top: 3px; }
.c-style { width: 181px; margin-left: 12px; }
.stylebox { flex: 1; background: #e8e8e8; color: #333; font-size: 11px; line-height: 19px; padding-left: 8px; }
.styleicons { display: flex; justify-content: flex-end; gap: 10px; padding-right: 2px; height: 18px; }
.styleicons svg { width: 24px; height: 16px; }
.bolt { width: 10px; height: 17px; position: absolute; left: 1871px; top: 20px; }
.d5 { position: absolute; left: 1891px; top: 6px; }
.c-gear { position: absolute; left: 1898px; top: 9px; height: 42px; }

/* work area */
.work { flex: 1; display: flex; min-height: 0; }
.collapse { height: 13px; font-size: 11px; line-height: 12px; color: #888; padding-left: 6px; background: #2b2b2b; }
.collapse.right { height: 12px; padding-left: 166px; }

.tools { width: 73px; box-sizing: border-box; border-right: 3px solid #2a2a2a; flex: none; background: #323232; }
.grip { width: 22px; height: 5px; margin: 3px auto; background: repeating-linear-gradient(90deg, #4e4e4e 0 1px, transparent 1px 2px); }
.toolgrid {
  display: grid;
  grid-template-columns: 30px 30px;
  grid-template-rows: 22px 22px 26px 26px 24px 24px 27px 24px 27px 24px;
  align-items: end;
  padding-left: 6px;
  margin-top: 6px;
}
.tool { position: relative; height: 18px; display: flex; justify-content: center; align-items: center; }
.tool svg { width: 18px; height: 18px; }
.tool.on { background: #232323; margin: 0 3px; border-radius: 2px; box-shadow: 0 0 0 2px #232323; }
.tool.more::after { content: ""; position: absolute; right: 2px; bottom: -2px; border-left: 3px solid transparent; border-bottom: 3px solid #aaa; }
.toolglyph { font: bold 21px/18px "Liberation Serif", serif; color: #b4b4b4; }
.gsw { width: 16px; height: 14px; }
.g1 { background: linear-gradient(90deg, #eee, #333); }
.g2 { background: linear-gradient(#444, #aaa 60%, #ccc); }
.well { position: relative; height: 55px; margin-top: 9px; }
.well-fill { position: absolute; left: 10px; top: 0; width: 33px; height: 33px; background: #c7a574; border: 1px solid #eee; z-index: 1; }
.well-stroke { position: absolute; left: 29px; top: 19px; width: 33px; height: 33px; background: #fff; }
.well-swap { position: absolute; left: 55px; top: 5px; width: 11px; height: 11px; }
.well-def { position: absolute; left: 11px; top: 41px; width: 11px; height: 11px; }
.well-def i, .well-def b { position: absolute; width: 7px; height: 7px; }
.well-def i { left: 0; top: 0; background: #333; border: 1px solid #ccc; z-index: 1; }
.well-def b { left: 3px; top: 3px; background: #111; border: 1px solid #ccc; }
.fmt { display: flex; align-items: center; height: 20px; margin-top: 5px; padding-left: 15px; }
.fmt-on { width: 18px; height: 18px; background: #202020; border-radius: 2px; display: flex; align-items: center; justify-content: center; }
.fmt-on i { width: 7px; height: 7px; border: 1px solid #bbb; }
.fmt-t { margin-left: 8px; font: bold 12px "Liberation Serif", serif; color: #aaa; }
.apply { display: flex; align-items: center; height: 18px; margin-top: 5px; padding-left: 7px; }
.apply-on { width: 18px; height: 18px; background: #202020; border-radius: 2px; display: flex; align-items: center; justify-content: center; }
.apply-on i { width: 12px; height: 12px; background: #c7a574; border: 1px solid #888; }
.apply-g { width: 12px; height: 12px; margin-left: 5px; background: linear-gradient(90deg, #eee, #333); }
.apply-n { width: 12px; height: 12px; margin-left: 8px; background: #fff; }
.viewmode { display: flex; align-items: center; margin-top: 7px; padding-left: 7px; }
.vm-on { width: 28px; height: 22px; background: #232323; border-radius: 2px; display: flex; align-items: center; justify-content: center; }
.vm-on svg, .vm-r svg { width: 13px; height: 13px; }
.vm-r { margin-left: 9px; }

/* document */
.doc { width: 1664px; flex: none; display: flex; flex-direction: column; position: relative; }
.tabs { height: 29px; display: flex; background: #2b2b2b; font-size: 11.500px; flex: none; }
.tab { display: flex; align-items: center; padding: 2px 0 0 15px; width: 267px; box-sizing: border-box; color: #858585; letter-spacing: .15px; font-weight: 500; }
.tab .x { margin-left: 9px; font-size: 13px; font-weight: 700; color: #999; }
.tab.active { background: #323232; color: #e4e4e4; width: 209px; padding-left: 14px; }
.tab.active .x { color: #eee; }
.hrow { height: 17px; display: flex; flex: none; background: #1d1d1d; }
.corner { width: 16px; flex: none; }
.corner svg { width: 16px; height: 17px; }
.hruler { flex: 1; position: relative; overflow: hidden; }
.ticks { position: absolute; left: 0; top: 0; width: 100%; height: 100%; }
.hl { position: absolute; top: 1px; font-size: 10.500px; line-height: 13px; color: #cfcfcf; }
.mid { flex: 1; display: flex; min-height: 0; }
.vruler { width: 16px; flex: none; background: #1d1d1d; position: relative; overflow: hidden; }
.vl { position: absolute; left: 1px; width: 10px; text-align: center; font-size: 10.500px; color: #cfcfcf; }
.vl i { display: block; font-style: normal; line-height: 8.700px; }
.canvas { flex: 1; background: #fff; position: relative; overflow: hidden; }
.sheet { position: absolute; left: 0; top: 0; width: 1631px; height: 927px; }
.vscroll { width: 17px; flex: none; background: #2d2d2d; position: relative; }
.vthumb { position: absolute; left: 2px; right: 2px; top: 0; height: 885px; background: #464646; border-radius: 0 0 6px 6px; }
.vscroll .chev { position: absolute; left: 3px; bottom: 3px; }
.status { height: 16px; flex: none; background: #2f2f2f; display: flex; align-items: center; font-size: 10.500px; position: relative; }
.s12 { width: 12px; height: 12px; color: #555; }
.s-a { margin-left: 11px; }
.s-b { margin-left: 8px; }
.pagesel { margin-left: 10px; width: 89px; height: 16px; box-sizing: border-box; border: 1px solid #444; border-radius: 2px; display: flex; color: #e0e0e0; background: #242424; font-size: 10px; }
.pagesel span { width: 71px; padding-left: 3px; line-height: 14px; box-sizing: border-box; }
.pagesel i { width: 17px; border-left: 1px solid #444; display: flex; align-items: center; justify-content: center; background: #323232; }
.s-c { margin-left: 10px; }
.s-d { margin-left: 9px; }
.s16 { width: 15px; height: 15px; color: #aaa; }
.s-e { margin-left: 14px; }
.st-prof { margin-left: 18px; width: 95px; color: #999; }
.s-f { margin-left: 6px; }
.dot { width: 12px; height: 12px; border-radius: 50%; background: #4aa84a; margin-left: 14px; }
.st-err { margin-left: 5px; width: 68px; color: #ddd; }
.s-g { margin-left: 4px; }
.s-h { margin-left: 8px; transform: scaleX(-1); color: #555; }
.hthumb { position: absolute; left: 741px; width: 615px; top: 0; bottom: 0; background: #474747; border-radius: 0 6px 6px 0; }
.s-i { position: absolute; left: 1611px; top: 3px; color: #666; }
.s-j { position: absolute; left: 1629px; top: 1px; width: 16px; height: 14px; color: #bbb; }

/* pages panel */
.pages {
  position: absolute;
  right: 1px;
  top: 14px;
  width: 304px;
  height: 634px;
  background: #323232;
  display: flex;
  flex-direction: column;
  border-top: 1px solid #222;
  box-sizing: border-box;
  z-index: 2;
}
.p-tabs { height: 27px; flex: none; display: flex; align-items: center; background: #2a2a2a; position: relative; font-weight: 500; font-size: 11.500px; color: #7d7d7d; }
.p-tab { height: 27px; line-height: 29px; padding: 0 12px; box-sizing: border-box; }
.p-tab.active { width: 63px; background: #323232; color: #e2e2e2; display: flex; align-items: center; gap: 4px; padding: 2px 0 0 7px; }
.p-tab.active svg { width: 8px; height: 12px; }
.p-tab:nth-child(3) { margin-left: 13px; padding: 0 12px 0 0; width: auto; }
.p-more { position: absolute; left: 263px; color: #bbb; font-size: 13px; }
.p-bar { position: absolute; left: 280px; top: 7px; width: 1px; height: 12px; background: #666; }
.p-ham { position: absolute; left: 287px; top: 7px; width: 12px; height: 12px; color: #999; }
.p-masters { height: 231px; flex: none; position: relative; border-bottom: 2px solid #3a3a3a; box-sizing: border-box; font-size: 11px; color: #ddd; }
.master { display: flex; align-items: flex-start; padding: 0 21px 0 4px; box-sizing: border-box; }
.master span { flex: 1; line-height: 15px; }
.master.first { height: 29px; padding-top: 6px; }
.master.first .pg { margin-top: -2px; }
.master.two { height: 30px; padding-top: 6px; }
.master.two .pg { margin-top: -2px; }
.master .sel { flex: none; width: 72px; background: #2f8ae6; color: #fff; font-weight: 700; font-size: 10.500px; margin-right: auto; text-align: center; }
.pg { display: block; width: 18px; height: 24px; flex: none; border: 1px solid #999; box-sizing: border-box; }
.pg.w { background: #fff; }
.pg.b { background: #8fbef5; }
.p-thumbs { flex: 1; position: relative; font-size: 10.500px; color: #ddd; }
.thumb { position: absolute; }
.t1 { left: 146px; top: 6px; width: 25px; }
.t2 { left: 121px; top: 76px; width: 50px; }
.thumb em { font-style: normal; display: block; text-align: center; margin-top: 7px; }
.t1 em { margin-left: -3px; }
.t2 em { margin-left: -5px; }
.tri { position: absolute; left: 7px; top: 0; border: 5px solid transparent; border-top-color: #999; border-bottom: 0; }
.img { position: relative; box-sizing: border-box; border: 1px solid #888; overflow: visible; }
.img u { text-decoration: none; position: absolute; top: 0; font: 10px/11px "Liberation Sans", sans-serif; color: #111; background: #fff; }
.img::after { content: ""; position: absolute; left: 50%; top: -6px; bottom: -6px; width: 1px; background: #999; }
.one { margin-top: 6px; height: 36px; background: radial-gradient(circle at 50% 30%, #5a5040 0 3px, transparent 7px), linear-gradient(#222 0 28px, #c9a277 28px 32px, #3a2a1e 32px); }
.one::after { left: -1px; }
.one u { right: 0; width: 11px; padding-left: 2px; box-sizing: border-box; }
.spread { height: 35px; background: linear-gradient(transparent 0 25px, #fff 25px), repeating-linear-gradient(90deg, #111 0 3px, #555 3px 4px, #0a0a0a 4px 7px, #888 7px 8px); }
.spread u { left: 0; width: 12px; padding-left: 2px; box-sizing: border-box; }
.spread u + u { left: auto; right: 0; }
.p-foot { height: 24px; flex: none; background: #303030; display: flex; align-items: center; padding-left: 6px; position: relative; font-size: 10.500px; color: #ddd; border-top: 1px solid #2a2a2a; }
.p-foot svg { position: absolute; top: 5px; width: 14px; height: 14px; color: #aaa; }
.pf1 { left: 209px; width: 18px !important; }
.pf2 { left: 240px; }
.pf3 { left: 268px; }
.p-grip { height: 8px; flex: none; border-top: 1px solid #222; background: #2e2e2e; }
.p-grip .grip { margin: 1px 0 0 145px; }

/* dock */
.dock { flex: 1; background: #323232; border-left: 1px solid #262626; }
.dsec { display: flex; flex-direction: column; border-bottom: 1px solid #252525; padding-bottom: 1px; }
.dsec .grip { margin: 3px 0 3px 78px; flex: none; }
.ditem { height: 22px; flex: none; margin: 3px 7px 3px 6px; padding-left: 3px; display: flex; align-items: center; gap: 8px; border-radius: 2px; font-weight: 500; font-size: 11.700px; color: #d6d6d6; }
.ditem svg { width: 20px; height: 20px; color: #ababab; }
.ditem.active { background: #1f1f1f; }
.dglyph { width: 20px; height: 20px; flex: none; position: relative; color: #ababab; text-align: center; }
.dglyph em { font: italic 21px/20px "Liberation Serif", serif; }
.dglyph.fx em { font-size: 18px; }
.dglyph.zeichen em { position: absolute; right: 0; top: -2px; font: 13px/15px "Liberation Sans", sans-serif; }
.dglyph.zeichen svg { position: absolute; left: 0; top: 0; }
.blackline { height: 2px; background: #111; flex: none; }
</style>
